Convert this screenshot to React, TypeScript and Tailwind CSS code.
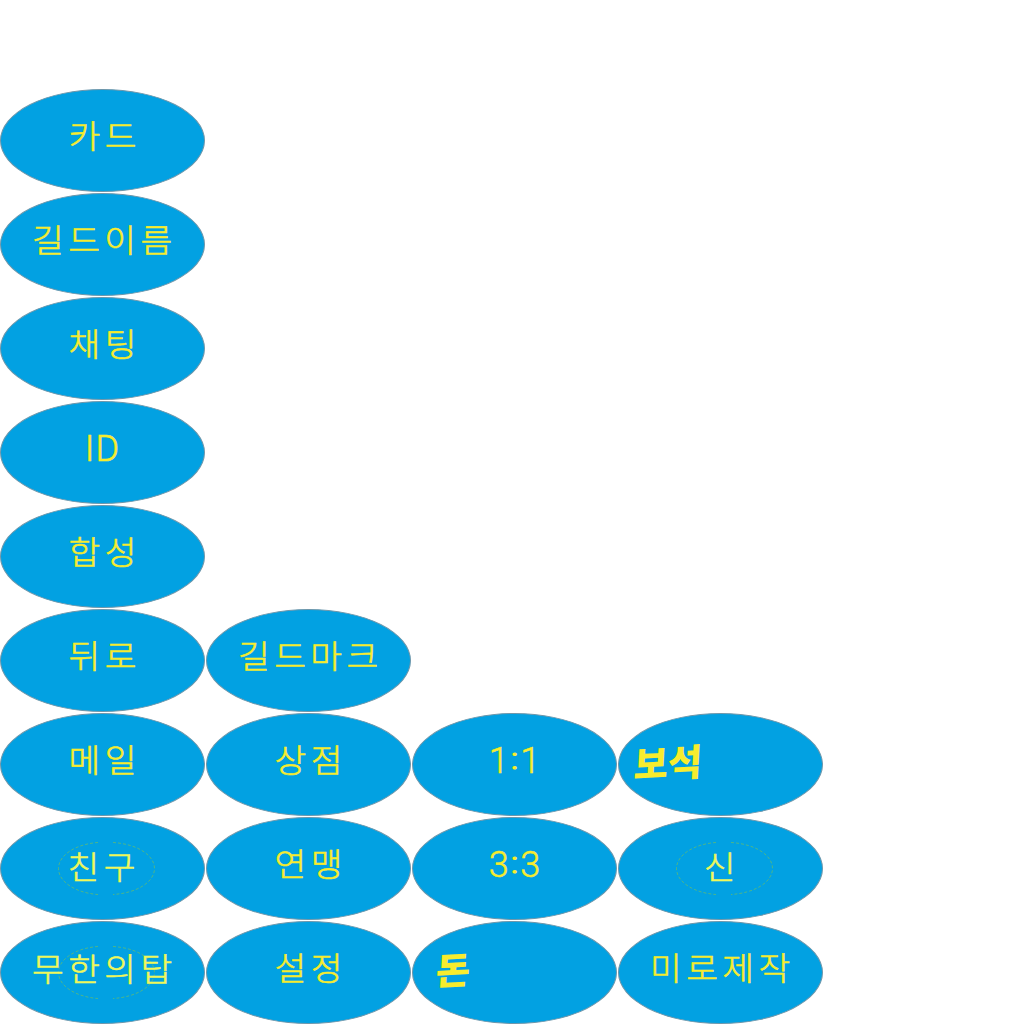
type Kind = "hangul" | "latin" | "score" | "brush";

interface Item {
  label: string;
  kind?: Kind;
  ring?: boolean;
  // placement tweaks inside the oval
  place?: string;
}

const columns: Item[][] = [
  [
    { label: "카드" },
    { label: "길드이름" },
    { label: "채팅" },
    { label: "ID", kind: "latin" },
    { label: "합성" },
    { label: "뒤로" },
    { label: "메일" },
    { label: "친구", ring: true, place: "pb-[5px] pr-[2px]" },
    { label: "무한의탑", ring: true, place: "pb-[10px] pr-[1px]" },
  ],
  [{ label: "길드마크" }, { label: "상점" }, { label: "연맹" }, { label: "설정" }],
  [
    { label: "1:1", kind: "score" },
    { label: "3:3", kind: "score" },
    { label: "돈", kind: "brush", place: "pl-[23px] pb-[8px]" },
  ],
  [
    { label: "보석", kind: "brush", place: "pl-[15px] pb-[7px]" },
    { label: "신", ring: true, place: "pb-[5px] pr-[2px]" },
    { label: "미로제작" },
  ],
];

const textStyle: Record<Kind, string> = {
  hangul:
    "font-['Noto_Sans_CJK_KR',sans-serif] font-light text-[34px] tracking-[4.4px] -mr-[4.4px] scale-x-[1.015] scale-y-[0.95] [-webkit-text-stroke:0.6px_currentColor]",
  latin:
    "font-[Roboto,sans-serif] font-light text-[36px] tracking-[1.2px] [-webkit-text-stroke:0.6px_currentColor]",
  score:
    "font-[Roboto,sans-serif] font-light text-[36px] [-webkit-text-stroke:0.5px_currentColor]",
  brush:
    "font-['Noto_Sans_CJK_KR',sans-serif] font-black text-[37px] -skew-x-6 -rotate-3",
};

function Ring() {
  return (
    <svg className="absolute left-[57px] top-[24px] h-[53px] w-[97px]" viewBox="0 0 97 53" fill="none">
      <path
        d="M40 .5C18 2 .5 13 .5 26.5S18 51 40 52.5M55 .5C79 2 96.5 13 96.5 26.5S79 51 55 52.5"
        stroke="#8cc63f"
        strokeOpacity=".55"
        strokeWidth="1"
        strokeDasharray="3 2"
      />
    </svg>
  );
}

function Score({ label }: { label: string }) {
  const [home, away] = label.split(":");
  return (
    <>
      {home}
      <span className="relative -top-[2px] mx-[2px] inline-block origin-center scale-y-[0.82] [-webkit-text-stroke:1.4px_currentColor]">
        :
      </span>
      {away}
    </>
  );
}

function Oval({ label, kind = "hangul", ring, place = "pb-[12px]" }: Item) {
  const align = kind === "brush" ? "justify-start" : "justify-center";
  const tone = ring ? "text-[#f0f85a]" : "text-[#f7ec2e]";
  return (
    <div
      className={`relative flex h-[103px] w-[205px] items-center rounded-[50%] border-[0.5px] border-[#6f97ab] bg-[#02a1e2] ${align} ${
        kind === "latin" || kind === "score" ? "pb-[7px]" : place
      }`}
    >
      {ring && <Ring />}
      <span className={`whitespace-nowrap leading-none ${tone} ${textStyle[kind]}`}>
        {kind === "score" ? <Score label={label} /> : label}
      </span>
    </div>
  );
}

export default function App() {
  return (
    <main className="flex h-[1024px] w-[1024px] items-end gap-px overflow-hidden bg-white">
      {columns.map((items, c) => (
        <div key={c} className="flex flex-col gap-px">
          {items.map((item) => (
            <Oval key={item.label} {...item} />
          ))}
        </div>
      ))}
    </main>
  );
}
